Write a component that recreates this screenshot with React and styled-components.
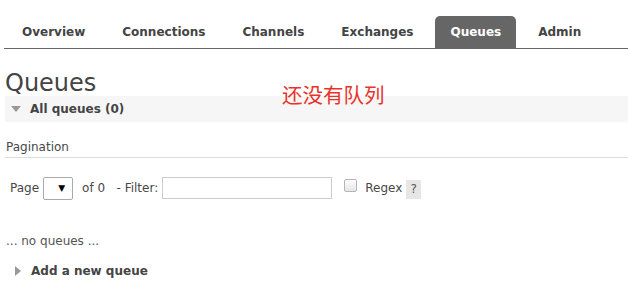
import React from "react";
import styled, { createGlobalStyle } from "styled-components";

const GlobalStyle = createGlobalStyle`
  body {
    margin: 0;
    background: #fff;
    color: #484848;
    font-family: "DejaVu Sans", Verdana, sans-serif;
    font-size: 12px;
  }
`;

const Nav = styled.ul`
  display: flex;
  gap: 7px;
  list-style: none;
  margin: 16px 0 0 4px;
  padding: 0 0 0 3px;
  border-bottom: 1px solid #666;
`;

const Tab = styled.li`
  height: 32px;
  line-height: 33px;
  padding: 0 15px;
  font-weight: bold;
  font-size: 12px;
  color: ${(p) => (p.active ? "#fff" : "#444")};
  background: ${(p) => (p.active ? "#666" : "transparent")};
  border-radius: 5px 5px 0 0;
`;

const Main = styled.div`
  position: relative;
  padding: 21px 0 0 5px;
`;

const Title = styled.h1`
  margin: 0;
  font-size: 24px;
  line-height: 26px;
  font-weight: normal;
  color: #444;
`;

const Note = styled.span`
  position: absolute;
  left: 282px;
  top: 33px;
  font-family: "Noto Sans CJK SC", sans-serif;
  font-size: 20.5px;
  line-height: 24px;
  color: #e8332a;
`;

const SectionBar = styled.div`
  display: flex;
  align-items: center;
  gap: 9px;
  height: 26px;
  margin-top: ${(p) => p.gapAbove || 0}px;
  padding-left: ${(p) => p.indent || 6}px;
  background: ${(p) => (p.plain ? "transparent" : "#f6f6f6")};
  font-weight: bold;
  color: #444;
`;

const ArrowDown = styled.span`
  width: 0;
  height: 0;
  border-left: 5.5px solid transparent;
  border-right: 5.5px solid transparent;
  border-top: 6px solid #999;
`;

const ArrowRight = styled.span`
  width: 0;
  height: 0;
  margin-right: 1px;
  border-top: 5px solid transparent;
  border-bottom: 5px solid transparent;
  border-left: 6px solid #999;
`;

const SubHeading = styled.div`
  margin-top: 18px;
  padding: 0 0 3px 1px;
  line-height: 14px;
  border-bottom: 1px solid #ddd;
`;

const Controls = styled.div`
  display: flex;
  align-items: center;
  margin-top: 18px;
  padding-left: 5px;
  height: 24px;
`;

const Select = styled.span`
  display: flex;
  align-items: center;
  justify-content: flex-end;
  box-sizing: border-box;
  width: 30px;
  height: 23px;
  margin: 0 9px 0 4px;
  padding-right: 7px;
  border: 1px solid #a9a9a9;
  border-radius: 2px;
  background: #fff;
  font-size: 9px;
  color: #000;
`;

const TextInput = styled.input`
  box-sizing: border-box;
  width: 170px;
  height: 22px;
  margin: 0 12px 0 4px;
  border: 1px solid #ccc;
  padding: 0 3px;
  font: inherit;
`;

const Check = styled.span`
  box-sizing: border-box;
  width: 13px;
  height: 13px;
  margin: 0 8px 5px 0;
  border: 1px solid #b5b5b5;
  border-radius: 2px;
  background: linear-gradient(#fdfdfd, #e6e6e6);
`;

const Help = styled.span`
  width: 15px;
  height: 19px;
  margin: 2px 0 0 4px;
  line-height: 19px;
  text-align: center;
  background: #e6e6e6;
  color: #555;
`;

const Empty = styled.div`
  margin-top: 34px;
  padding-left: 1px;
  line-height: 14px;
  color: #555;
`;

const tabs = ["Overview", "Connections", "Channels", "Exchanges", "Queues", "Admin"];

export default function App() {
  return (
    <>
      <GlobalStyle />
      <Nav>
        {tabs.map((t) => (
          <Tab key={t} active={t === "Queues"}>
            {t}
          </Tab>
        ))}
      </Nav>
      <Main>
        <Title>Queues</Title>
        <Note>还没有队列</Note>
        <SectionBar>
          <ArrowDown />
          All queues (0)
        </SectionBar>
        <SubHeading>Pagination</SubHeading>
        <Controls>
          Page
          <Select>▼</Select>
          of 0&nbsp;&nbsp;&nbsp;- Filter:
          <TextInput type="text" />
          <Check />
          Regex
          <Help>?</Help>
        </Controls>
        <Empty>... no queues ...</Empty>
        <SectionBar plain indent={10} gapAbove={10}>
          <ArrowRight />
          Add a new queue
        </SectionBar>
      </Main>
    </>
  );
}
